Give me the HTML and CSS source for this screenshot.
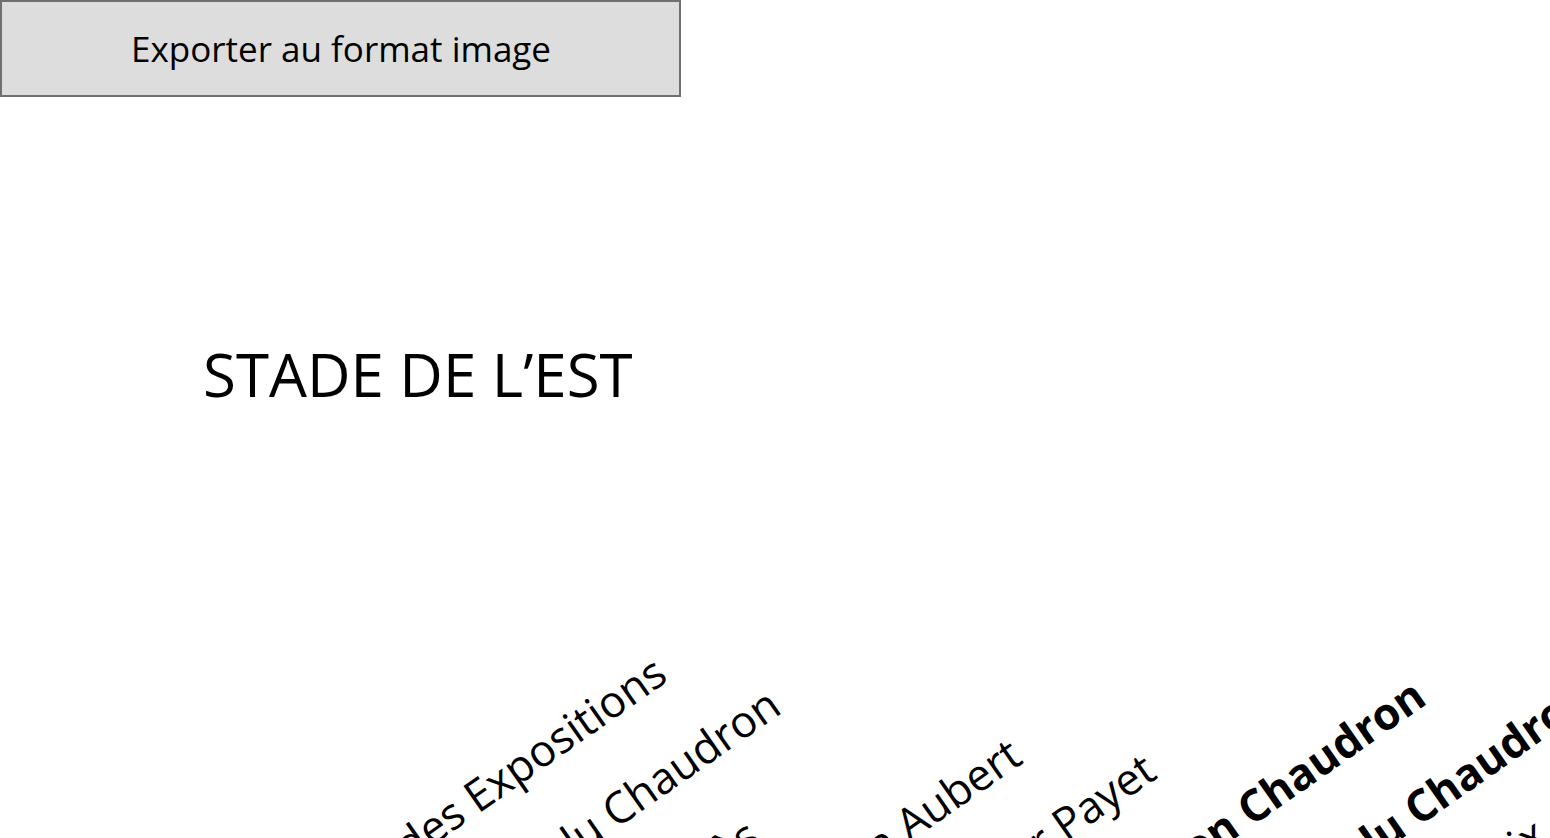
FILE: index.html
```html
<!DOCTYPE html>
<html lang="fr">
<head>
<meta charset="utf-8">
<title>Stade de l’Est</title>
<link rel="stylesheet" href="styles.css">
</head>
<body>
<div class="page">
  <button class="export-btn" type="button">Exporter au format image</button>
  <h1 class="stop-title">STADE DE L’EST</h1>
  <div class="line-diagram">
    <div class="stop" style="left:673px;top:84px"><span class="stop-label">Parc des Expositions</span></div>
    <div class="stop" style="left:786px;top:116px"><span class="stop-label">Cité du Chaudron</span></div>
    <div class="stop" style="left:765px;top:247px"><span class="stop-label">Les Cyprès</span></div>
    <div class="stop" style="left:1027px;top:166px"><span class="stop-label">Lycée Jean Aubert</span></div>
    <div class="stop" style="left:1162px;top:181px"><span class="stop-label">Docteur Payet</span></div>
    <div class="stop" style="left:1431px;top:107px"><span class="stop-label stop-label--major">Station Chaudron</span></div>
    <div class="stop" style="left:1598px;top:107px"><span class="stop-label stop-label--major">Gare du Chaudron</span></div>
    <div class="stop" style="left:1553px;top:246px"><span class="stop-label">Sainte-Croix</span></div>
  </div>
</div>
</body>
</html>
```

FILE: styles.css
```css
html, body {
  margin: 0;
  padding: 0;
  background: #ffffff;
  overflow: hidden;
}

body {
  font-family: "Open Sans", "Noto Sans", "DejaVu Sans", sans-serif;
  color: #000000;
}

.page {
  display: flex;
  flex-direction: column;
  align-items: flex-start;
  width: 1550px;
  height: 838px;
}

.export-btn {
  box-sizing: border-box;
  width: 681px;
  height: 97px;
  margin: 0;
  padding: 0 0 0 1px;
  border: 2px solid #707070;
  background: #dddddd;
  font-family: "Open Sans", "Noto Sans", sans-serif;
  font-size: 35px;
  color: #000000;
  line-height: 1;
}

.stop-title {
  margin: 247px 0 0 203px;
  font-size: 60px;
  font-weight: 400;
  line-height: 1;
  white-space: nowrap;
}

.line-diagram {
  position: relative;
  margin-top: 196px;
  width: 1550px;
  height: 238px;
}

.stop {
  position: absolute;
  width: 0;
  height: 0;
}

.stop-label {
  position: absolute;
  right: 0;
  bottom: 0;
  white-space: nowrap;
  font-size: 44px;
  line-height: 1;
  transform-origin: right bottom;
  transform: rotate(-35deg);
}

.stop-label--major {
  font-weight: 700;
}
```
